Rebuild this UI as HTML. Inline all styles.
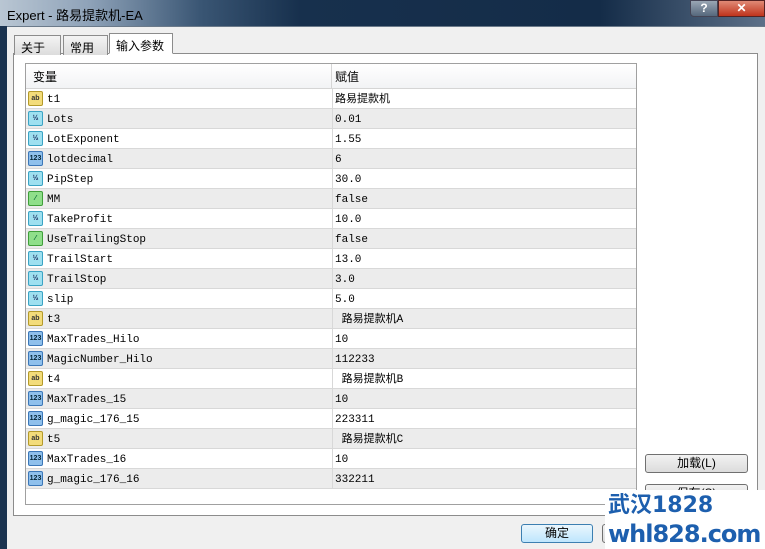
<!DOCTYPE html><html><head><meta charset="utf-8"><style>
*{margin:0;padding:0;box-sizing:border-box}
body{width:765px;height:549px;overflow:hidden;position:relative;background:#1b3350;font-family:"Liberation Sans","Noto Sans CJK SC",sans-serif;font-size:12px}
.title{position:absolute;left:0;top:0;width:765px;height:26px;background:linear-gradient(90deg,#b9c6d3 0,#8ea2b8 90px,#3a5674 200px,#17304d 300px,#142c48 600px,#5d7088 765px)}
.title span{position:absolute;left:7px;top:5px;font-size:13px;color:#000}
.client{position:absolute;left:7px;top:26px;width:758px;height:523px;background:#f0f0f0;border-top:1px solid #6b7a8a}
.tab{position:absolute;top:35px;height:20px;border:1px solid #8c8c8c;border-bottom:none;background:linear-gradient(#f4f4f4,#dcdcdc);font-size:12px;padding:3px 0 0 6px}
.page{position:absolute;left:13px;top:53px;width:745px;height:463px;border:1px solid #8c8c8c;background:#fff}
.tbl{position:absolute;left:25px;top:63px;width:612px;height:442px;border:1px solid #a0a0a0;background:#fff}
.hdr{position:absolute;left:0;top:0;width:610px;height:25px;background:linear-gradient(#fff,#f2f3f5);border-bottom:1px solid #d5d5d5}
.hdr span{position:absolute;top:4px;font-size:12px}
.row{position:absolute;left:0;width:610px;height:20px;border-bottom:1px solid #d8d8d8;font-family:"Liberation Mono","Noto Sans CJK SC",monospace;font-size:11px;line-height:19px}
.row.g{background:#ececec}
.row .n{position:absolute;left:21px;top:2px}
.row .v{position:absolute;left:306px;top:0;height:19px;padding:2px 0 0 2px;border-left:1px solid #d8d8d8}
.ic{position:absolute;left:2px;top:2px;width:15px;height:15px;border-radius:2px;font-size:7px;font-weight:bold;text-align:center;line-height:13px;font-family:"Liberation Sans",sans-serif}
.ab{background:#f3dc7a;border:1px solid #b49a2a;color:#333}
.hf{background:#9ee0f0;border:1px solid #3aa3c4;color:#125}
.i3{background:#8fc0ec;border:1px solid #3b77b8;color:#023}
.bo{background:#8fdf8a;border:1px solid #3f9f3a;color:#063}
.btn{position:absolute;height:19px;border:1px solid #707070;border-radius:3px;background:linear-gradient(#f2f2f2,#dcdcdc);font-size:12px;text-align:center;line-height:17px}
.wm{position:absolute;left:605px;top:490px;width:160px;height:59px;background:#fff;color:#1d5fae;font-weight:bold;font-size:22px;line-height:28px;padding:2px 0 0 3px;font-family:"DejaVu Sans","Noto Sans CJK SC",sans-serif;white-space:nowrap;overflow:hidden}
</style></head><body>
<div class="title"><span>Expert - 路易提款机-EA</span>
<div style="position:absolute;left:690px;top:0;width:28px;height:17px;border:1px solid #445;border-radius:0 0 0 4px;background:linear-gradient(#9aa6b4,#56687c);color:#fff;text-align:center;font-weight:bold;font-size:12px">?</div>
<div style="position:absolute;left:718px;top:0;width:47px;height:17px;border:1px solid #522;background:linear-gradient(#e08a76,#c0341c);color:#fff;text-align:center;font-weight:bold;font-size:12px">✕</div></div>
<div class="client"></div>
<div class="page"></div>
<div class="tab" style="left:14px;width:47px">关于</div>
<div class="tab" style="left:63px;width:45px">常用</div>
<div class="tab" style="left:109px;top:33px;height:21px;width:64px;background:#fff;border-bottom:1px solid #fff;z-index:2">输入参数</div>
<div class="tbl">
<div class="hdr"><span style="left:7px">变量</span><span style="left:305px;border-left:1px solid #d5d5d5;padding-left:3px;top:0;height:24px;padding-top:4px">赋值</span></div>
<div id="rows"></div>
</div>
<div class="btn" style="left:645px;top:454px;width:103px">加载(L)</div>
<div class="btn" style="left:645px;top:484px;width:103px">保存(S)</div>
<div class="btn" style="left:521px;top:524px;width:72px;border-color:#3c7fb1;background:linear-gradient(#eaf6fd,#bee6fd)">确定</div>
<div class="btn" style="left:602px;top:524px;width:72px">取消</div>
<div class="wm">武汉1828<br><span style="font-size:24px;letter-spacing:-1px">whl828.com</span></div>
<script>
var d=[["ab","t1","路易提款机"],["hf","Lots","0.01"],["hf","LotExponent","1.55"],["i3","lotdecimal","6"],["hf","PipStep","30.0"],["bo","MM","false"],["hf","TakeProfit","10.0"],["bo","UseTrailingStop","false"],["hf","TrailStart","13.0"],["hf","TrailStop","3.0"],["hf","slip","5.0"],["ab","t3"," 路易提款机A"],["i3","MaxTrades_Hilo","10"],["i3","MagicNumber_Hilo","112233"],["ab","t4"," 路易提款机B"],["i3","MaxTrades_15","10"],["i3","g_magic_176_15","223311"],["ab","t5"," 路易提款机C"],["i3","MaxTrades_16","10"],["i3","g_magic_176_16","332211"]];
var L={ab:"ab",hf:"½",i3:"123",bo:"⁄"},h="";
d.forEach(function(r,i){h+='<div class="row'+(i%2?' g':'')+'" style="top:'+(25+i*20)+'px"><div class="ic '+r[0]+'">'+L[r[0]]+'</div><span class="n">'+r[1]+'</span><span class="v">'+r[2].replace(/^ /,'&nbsp;')+'</span></div>'});
document.getElementById("rows").innerHTML=h;
</script>
</body></html>
